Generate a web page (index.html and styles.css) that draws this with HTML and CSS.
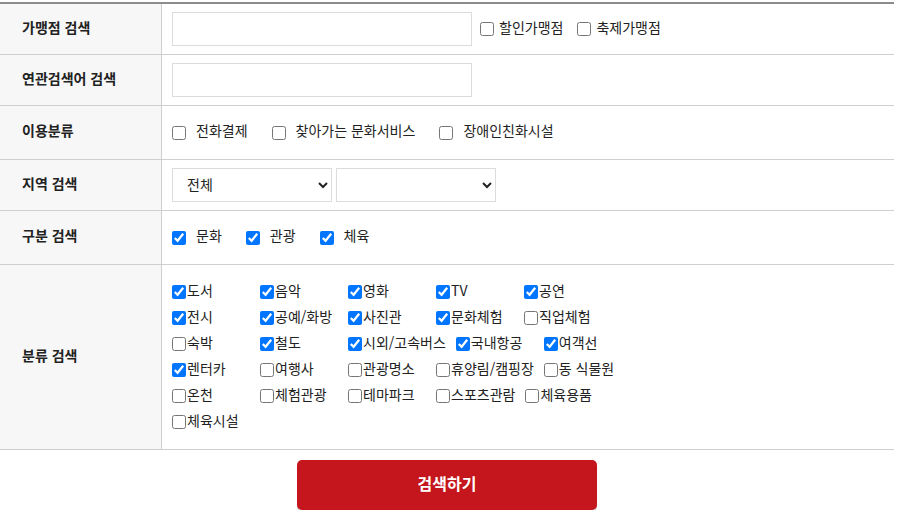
FILE: index.html
```html
<!DOCTYPE html>
<html lang="ko">
<head>
<meta charset="utf-8">
<title>가맹점 검색</title>
<link rel="stylesheet" href="styles.css">
</head>
<body>
<div class="page">
  <div class="form-table">
    <div class="row row--input">
      <div class="label">가맹점 검색</div>
      <div class="field field--inline">
        <input type="text" class="text-input">
        <label class="chk chk--tight"><input type="checkbox"><span>할인가맹점</span></label>
        <label class="chk chk--tight"><input type="checkbox"><span>축제가맹점</span></label>
      </div>
    </div>
    <div class="row row--input">
      <div class="label">연관검색어 검색</div>
      <div class="field">
        <input type="text" class="text-input">
      </div>
    </div>
    <div class="row row--check">
      <div class="label">이용분류</div>
      <div class="field">
        <label class="chk"><input type="checkbox"><span>전화결제</span></label>
        <label class="chk"><input type="checkbox"><span>찾아가는 문화서비스</span></label>
        <label class="chk"><input type="checkbox"><span>장애인친화시설</span></label>
      </div>
    </div>
    <div class="row row--input">
      <div class="label">지역 검색</div>
      <div class="field field--selects">
        <select class="select"><option>전체</option></select>
        <select class="select"><option></option></select>
      </div>
    </div>
    <div class="row row--check">
      <div class="label">구분 검색</div>
      <div class="field">
        <label class="chk"><input type="checkbox" checked><span>문화</span></label>
        <label class="chk"><input type="checkbox" checked><span>관광</span></label>
        <label class="chk"><input type="checkbox" checked><span>체육</span></label>
      </div>
    </div>
    <div class="row row--grid">
      <div class="label">분류 검색</div>
      <div class="field field--wrap">
        <div class="cat-list">
          <label class="cat"><input type="checkbox" checked><span>도서</span></label>
          <label class="cat"><input type="checkbox" checked><span>음악</span></label>
          <label class="cat"><input type="checkbox" checked><span>영화</span></label>
          <label class="cat"><input type="checkbox" checked><span>TV</span></label>
          <label class="cat"><input type="checkbox" checked><span>공연</span></label>
          <label class="cat"><input type="checkbox" checked><span>전시</span></label>
          <label class="cat"><input type="checkbox" checked><span>공예/화방</span></label>
          <label class="cat"><input type="checkbox" checked><span>사진관</span></label>
          <label class="cat"><input type="checkbox" checked><span>문화체험</span></label>
          <label class="cat"><input type="checkbox"><span>직업체험</span></label>
          <label class="cat"><input type="checkbox"><span>숙박</span></label>
          <label class="cat"><input type="checkbox" checked><span>철도</span></label>
          <label class="cat"><input type="checkbox" checked><span>시외/고속버스</span></label>
          <label class="cat"><input type="checkbox" checked><span>국내항공</span></label>
          <label class="cat"><input type="checkbox" checked><span>여객선</span></label>
          <label class="cat"><input type="checkbox" checked><span>렌터카</span></label>
          <label class="cat"><input type="checkbox"><span>여행사</span></label>
          <label class="cat"><input type="checkbox"><span>관광명소</span></label>
          <label class="cat"><input type="checkbox"><span>휴양림/캠핑장</span></label>
          <label class="cat"><input type="checkbox"><span>동 식물원</span></label>
          <label class="cat"><input type="checkbox"><span>온천</span></label>
          <label class="cat"><input type="checkbox"><span>체험관광</span></label>
          <label class="cat"><input type="checkbox"><span>테마파크</span></label>
          <label class="cat"><input type="checkbox"><span>스포츠관람</span></label>
          <label class="cat"><input type="checkbox"><span>체육용품</span></label>
          <label class="cat"><input type="checkbox"><span>체육시설</span></label>
        </div>
      </div>
    </div>
  </div>
  <div class="actions">
    <button type="button" class="btn-search">검색하기</button>
  </div>
</div>
</body>
</html>
```

FILE: styles.css
```css
* { box-sizing: border-box; }

html, body {
  margin: 0;
  padding: 0;
  background: #fff;
}

body {
  font-family: "Noto Sans CJK KR", "Noto Sans", sans-serif;
  font-size: 14px;
  color: #222;
}

.page {
  width: 894px;
  padding-top: 2px;
}

.form-table {
  border-top: 2px solid #8c8c8c;
  border-bottom: 1px solid #cfcfcf;
}

.row {
  display: grid;
  grid-template-columns: 162px 1fr;
  border-top: 1px solid #cfcfcf;
}

.row:first-child { border-top: 0; }

.label {
  display: flex;
  align-items: center;
  padding: 0 0 5px 22px;
  background: #f7f7f7;
  border-right: 1px solid #cfcfcf;
  font-weight: 700;
  color: #222;
}

.field {
  display: flex;
  align-items: center;
  padding: 0 10px;
}

.row--input .field { height: 50px; }
.row--check .field { height: 53px; }

.text-input {
  width: 300px;
  height: 34px;
  margin: 0;
  border: 1px solid #dcdcdc;
  background: #fff;
  font: inherit;
}

.chk {
  display: inline-flex;
  align-items: center;
  margin-right: 24px;
  color: #222;
}

.chk span { padding-bottom: 5px; }

.chk input {
  margin: 0 10px 0 0;
  width: 14px;
  height: 14px;
}

.field--inline .text-input { margin-right: 8px; }

.chk--tight { margin-right: 14px; }
.chk--tight input { margin: 0 5px 0 0; }

.field--selects { gap: 4px; }

.select {
  width: 160px;
  height: 34px;
  margin: 0;
  padding: 0 0 3px 10px;
  border: 1px solid #dcdcdc;
  border-radius: 0;
  background: #fff;
  font-family: inherit;
  font-size: 14px;
  color: #222;
}

.field--wrap {
  padding: 14px 10px;
  align-items: flex-start;
}

.cat-list {
  display: flex;
  flex-wrap: wrap;
  width: 500px;
}

.cat {
  display: flex;
  align-items: center;
  min-width: 78px;
  height: 26px;
  margin-right: 10px;
  color: #222;
}

.cat span { padding-bottom: 5px; }

.cat input {
  margin: 0 1px 0 0;
  width: 14px;
  height: 14px;
}

.actions {
  display: flex;
  justify-content: center;
  padding-top: 10px;
}

.btn-search {
  width: 300px;
  height: 50px;
  padding: 0 0 5px;
  border: 0;
  border-radius: 5px;
  background: #c4161c;
  box-shadow: 0 2px 1px #d6d6d6;
  color: #fff;
  font-family: inherit;
  font-size: 16px;
  font-weight: 700;
  cursor: pointer;
}
```
